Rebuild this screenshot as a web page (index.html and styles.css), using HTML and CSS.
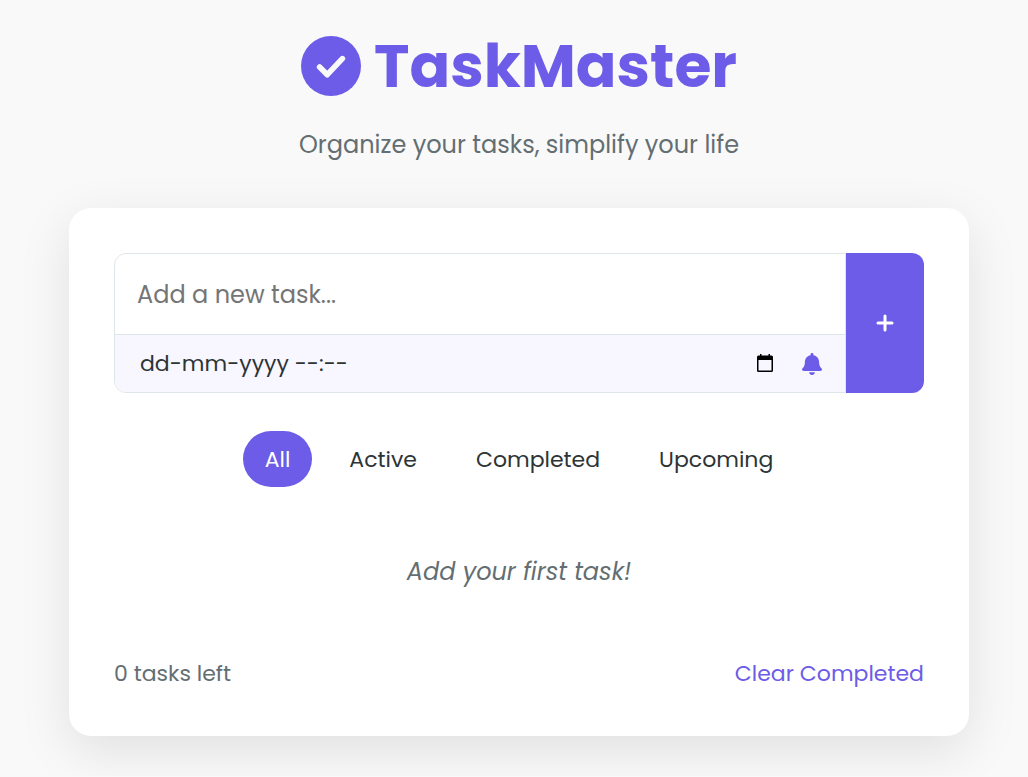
FILE: index.html
```html
<!DOCTYPE html>
<html lang="en">
<head>
<meta charset="utf-8">
<meta name="viewport" content="width=device-width, initial-scale=1">
<title>TaskMaster</title>
<link rel="stylesheet" href="styles.css">
</head>
<body>
<div class="page">
  <header class="header">
    <h1 class="brand">
      <svg class="brand-icon" viewBox="0 0 512 512" aria-hidden="true"><circle cx="256" cy="256" r="256" fill="currentColor"/><path d="M159 265l65 65 129-137" fill="none" stroke="#f9f9f9" stroke-width="48" stroke-linecap="round" stroke-linejoin="round"/></svg>
      <span>TaskMaster</span>
    </h1>
    <p class="tagline">Organize your tasks, simplify your life</p>
  </header>
  <main class="card">
    <form class="task-form">
      <div class="fields">
        <input class="task-input" type="text" placeholder="Add a new task..." aria-label="New task">
        <div class="due-row">
          <input class="due-input" type="text" placeholder="dd-mm-yyyy --:--" aria-label="Due date and time">
          <button class="icon-button calendar" type="button" aria-label="Open calendar">
            <svg width="20" height="20" viewBox="0 0 20 20"><path d="M5 0h1.500v1.500h7V0H15v1.500h1.500q1.500 0 1.500 1.500v13.500q0 1.500-1.500 1.500h-13Q2 18 2 16.500V3q0-1.500 1.500-1.500H5zM3.500 6v10.500h13V6z" fill="currentColor" fill-rule="evenodd"/></svg>
          </button>
          <button class="icon-button bell" type="button" aria-label="Set reminder">
            <svg width="20" height="22" viewBox="0 0 448 512" preserveAspectRatio="none"><path d="M224 0c-18 0-32 14-32 32v19C119 66 64 131 64 208v19c0 47-17 92-48 127l-8 9c-8 9-10 23-5 34s16 19 29 19h384c13 0 24-8 29-19s3-25-5-34l-8-9c-31-35-48-80-48-127v-19c0-77-55-142-128-157V32c0-18-14-32-32-32zm45 493c12-12 19-28 19-45H160c0 17 7 33 19 45s28 19 45 19 33-7 45-19z" fill="currentColor"/></svg>
          </button>
        </div>
      </div>
      <button class="add-button" type="submit" aria-label="Add task">
        <svg width="18" height="18" viewBox="0 0 18 18"><path d="M9 2v14M2 9h14" stroke="currentColor" stroke-width="3" stroke-linecap="round"/></svg>
      </button>
    </form>
    <nav class="filters" aria-label="Filter tasks">
      <button class="filter active" type="button">All</button>
      <button class="filter" type="button">Active</button>
      <button class="filter" type="button">Completed</button>
      <button class="filter" type="button">Upcoming</button>
    </nav>
    <p class="empty">Add your first task!</p>
    <footer class="footer">
      <span>0 tasks left</span>
      <button class="clear" type="button">Clear Completed</button>
    </footer>
  </main>
</div>
</body>
</html>
```

FILE: styles.css
```css
* { box-sizing: border-box; margin: 0; padding: 0; }

body {
  background: #f9f9f9;
  color: #2d3436;
  font-family: Poppins, Inter, sans-serif;
  font-size: 22px;
}

button, input { font: inherit; color: inherit; border: 0; background: none; }
button { cursor: pointer; }
svg { display: block; }

.page { max-width: 910px; margin: 0 auto; padding: 29px 0 40px 10px; }

.header { text-align: center; margin-bottom: 45px; }

.brand {
  display: flex;
  align-items: center;
  justify-content: center;
  gap: 13px;
  color: #6c5ce7;
  font-size: 60px;
  font-weight: 700;
  line-height: 74px;
  margin-bottom: 24px;
}
.brand-icon { width: 60px; height: 60px; }

.tagline { color: #636e72; font-size: 24px; line-height: 36px; }

.card {
  background: #fff;
  border-radius: 22px;
  padding: 45px;
  box-shadow: 0 15px 52px rgba(0, 0, 0, 0.1);
}

.task-form { display: flex; margin-bottom: 38px; }

.fields {
  flex: 1;
  min-width: 0;
  border: 1px solid #dfe6e9;
  border-radius: 12px 0 0 12px;
  overflow: hidden;
}

.task-input {
  display: block;
  width: 100%;
  height: 80px;
  padding: 0 22px;
  font-size: 24px;
}
.task-input::placeholder { color: #757575; opacity: 1; }

.due-row {
  display: flex;
  align-items: center;
  height: 58px;
  padding: 0 23px 0 25px;
  border-top: 1px solid #dfe6e9;
  background: #f8f7ff;
}
.due-input { flex: 1; min-width: 0; }
.due-input::placeholder { color: #2d3436; opacity: 1; }

.calendar { color: #000; margin-right: 27px; }
.bell { color: #6c5ce7; }

.add-button {
  display: flex;
  align-items: center;
  justify-content: center;
  width: 78px;
  background: #6c5ce7;
  color: #fff;
  border-radius: 0 12px 12px 0;
}

.filters { display: flex; justify-content: center; gap: 15px; }
.filter { height: 56px; padding: 0 22px; border-radius: 30px; }
.filter.active { background: #6c5ce7; color: #fff; }

.empty {
  padding: 66px 0;
  text-align: center;
  color: #636e72;
  font-size: 24px;
  font-style: italic;
  line-height: 38px;
}

.footer {
  display: flex;
  align-items: center;
  justify-content: space-between;
  color: #636e72;
  line-height: 34px;
}
.clear { color: #6c5ce7; }
```
